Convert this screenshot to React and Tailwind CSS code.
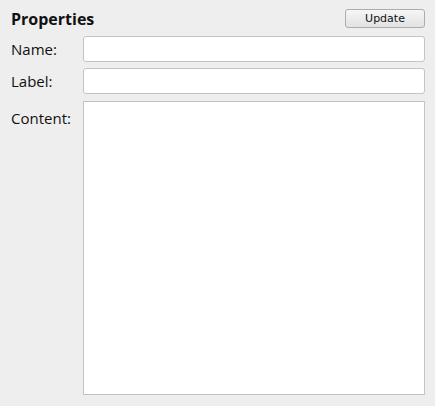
export default function App() {
  return (
    <div
      className="w-[435px] h-[406px] bg-[#eeeeee] pl-[11px] pr-[10px] pt-[9px] pb-[11px] flex flex-col text-[#111]"
      style={{ fontFamily: '"Open Sans", sans-serif' }}
    >
      <div className="flex items-center justify-between h-[19px]">
        <h2 className="text-[16px] font-bold leading-none">Properties</h2>
        <button
          className="w-[80px] h-[19px] border border-[#adadad] rounded-[3px] bg-gradient-to-b from-[#f6f6f6] to-[#e2e2e2] text-[11px] text-[#111] leading-none"
          style={{ fontFamily: 'Tahoma, "DejaVu Sans", sans-serif' }}
        >
          Update
        </button>
      </div>
      <div className="flex items-center mt-[8px]">
        <label className="w-[72px] text-[15px]">Name:</label>
        <input className="flex-1 h-[26px] bg-white border border-[#c3c3c3] rounded-[3px] outline-none" />
      </div>
      <div className="flex items-center mt-[6px]">
        <label className="w-[72px] text-[15px]">Label:</label>
        <input className="flex-1 h-[26px] bg-white border border-[#c3c3c3] rounded-[3px] outline-none" />
      </div>
      <div className="flex flex-1 mt-[7px]">
        <label className="w-[72px] text-[15px] pt-[6px]">Content:</label>
        <textarea className="flex-1 bg-white border border-[#c3c3c3] resize-none outline-none" />
      </div>
    </div>
  );
}
